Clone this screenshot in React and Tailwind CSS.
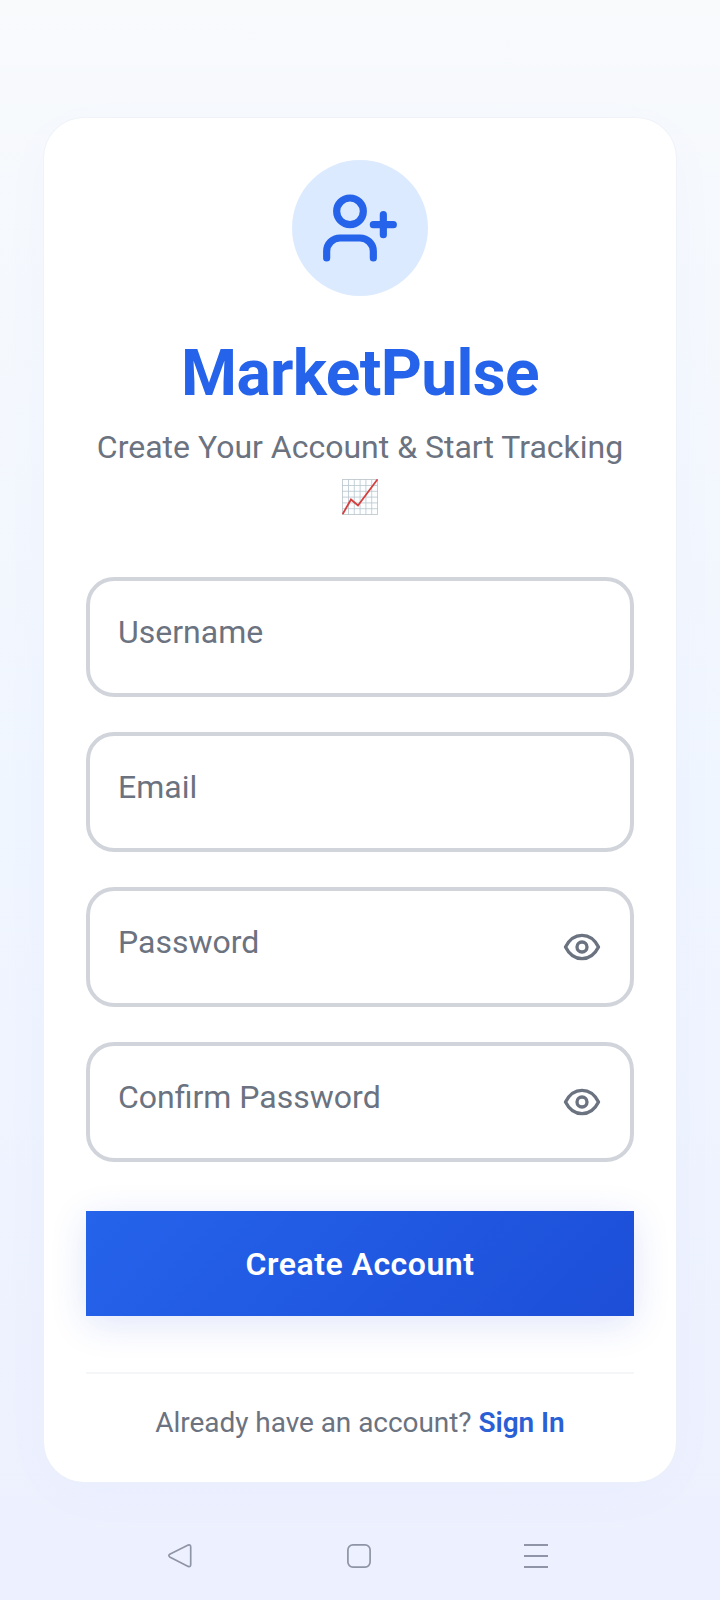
import { useState } from 'react';

function UserPlusIcon() {
  return (
    <svg className="size-20" viewBox="0 0 24 24" fill="none" stroke="#2563eb" strokeWidth="2.15" strokeLinecap="round" strokeLinejoin="round">
      <path d="M16 21v-2a4 4 0 0 0-4-4H6a4 4 0 0 0-4 4v2" />
      <circle cx="9" cy="7" r="4" />
      <path d="M19 8v6M22 11h-6" />
    </svg>
  );
}

function EyeIcon() {
  return (
    <svg className="size-10 text-[#6b7280]" viewBox="0 0 24 24" fill="none" stroke="currentColor" strokeWidth="2" strokeLinejoin="round">
      <path d="M2.1 12C4.3 7.6 7.9 5 12 5s7.7 2.6 9.9 7c-2.2 4.4-5.8 7-9.9 7s-7.7-2.6-9.9-7z" />
      <circle cx="12" cy="12" r="3" />
    </svg>
  );
}

function ChartIcon() {
  return (
    <svg className="size-9" viewBox="0 0 36 36" fill="none" role="img" aria-label="Chart increasing">
      <rect x="0.5" y="0.5" width="35" height="35" fill="#fdfeff" stroke="#c3cbcf" strokeWidth="0.9" />
      <path d="M6.5 0v36M12.3 0v36M18.1 0v36M23.9 0v36M29.7 0v36M0 6.5h36M0 12.3h36M0 18.1h36M0 23.9h36M0 29.7h36" stroke="#b9c7ce" strokeWidth="0.8" />
      <path d="M1 34.5L9 20.5L16 26.5L35 1" stroke="#d63f3c" strokeWidth="1.8" strokeLinecap="round" />
    </svg>
  );
}

function Field({ label, password }) {
  const [value, setValue] = useState('');
  return (
    <div className="flex h-[120px] items-center rounded-[28px] border-4 border-[#d1d5db] bg-white pr-7 pl-7">
      <input
        className="mb-[11px] h-12 min-w-0 flex-1 text-[32px] text-[#6b7280] outline-none placeholder:text-[#6b7280]"
        placeholder={label}
        aria-label={label}
        type={password ? 'password' : 'text'}
        value={value}
        onChange={(e) => setValue(e.target.value)}
      />
      {password && <EyeIcon />}
    </div>
  );
}

export default function App() {
  return (
    <div className="flex h-[1600px] w-full flex-col bg-linear-to-b from-[#f8fafc] via-[#f0f6ff] to-[#edf0fe] px-11 pt-[118px] font-['Roboto',sans-serif]">
      <main className="flex h-[1364px] flex-col rounded-[40px] bg-white px-[42px] pt-[42px] shadow-[0_0_0_1px_rgba(235,240,246,0.6),0_12px_60px_rgba(37,99,235,0.025)]">
        <div className="flex size-[136px] items-center justify-center self-center rounded-full bg-[#dbeafe]">
          <UserPlusIcon />
        </div>
        <h1 className="mt-10 text-center text-[64px] leading-[76px] font-bold tracking-[-0.64px] text-[#2563eb]">MarketPulse</h1>
        <p className="mt-[11px] text-center text-[32px] leading-[48px] text-[#6b7280]">Create Your Account &amp; Start Tracking</p>
        <div className="mt-[8px] flex justify-center">
          <ChartIcon />
        </div>
        <form className="mt-[62px] flex flex-col gap-[35px]" onSubmit={(e) => e.preventDefault()}>
          <Field label="Username" />
          <Field label="Email" />
          <Field label="Password" password />
          <Field label="Confirm Password" password />
          <button className="mt-[14px] h-[105px] bg-linear-135 from-[#2563eb] to-[#1d4ed8] text-[32px] font-semibold tracking-[0.5px] text-white shadow-[0_8px_36px_rgba(45,80,220,0.15)]">
            Create Account
          </button>
        </form>
        <div className="mt-14 border-t-2 border-[#f5f6f8] pt-[28px] text-center text-[28px] leading-[42px] tracking-[-0.05px] text-[#6b7280]">
          Already have an account? <a className="font-semibold text-[#2a60d6]">Sign In</a>
        </div>
      </main>
      <nav className="flex h-[118px] items-center pt-[29px] pl-[124px] text-[#8f94a6]">
        <svg className="h-6 w-6" viewBox="0 0 24 24" fill="none" stroke="currentColor" strokeWidth="1.7" strokeLinejoin="round">
          <path d="M20.2 1.1L1.7 10.3Q0 11.6 1.7 12.9L20.2 22.4Q22.7 23.2 22.7 20.5V3Q22.7 .3 20.2 1.1Z" />
        </svg>
        <svg className="ml-[155px] h-6 w-6" viewBox="0 0 24 24" fill="none" stroke="currentColor" strokeWidth="1.7">
          <rect x="0.9" y="0.9" width="22.2" height="22.2" rx="5" />
        </svg>
        <svg className="ml-[153px] h-6 w-6" viewBox="0 0 24 24" stroke="currentColor" strokeWidth="1.8">
          <path d="M0 1h24M0 12h24M0 23h24" />
        </svg>
      </nav>
    </div>
  );
}
